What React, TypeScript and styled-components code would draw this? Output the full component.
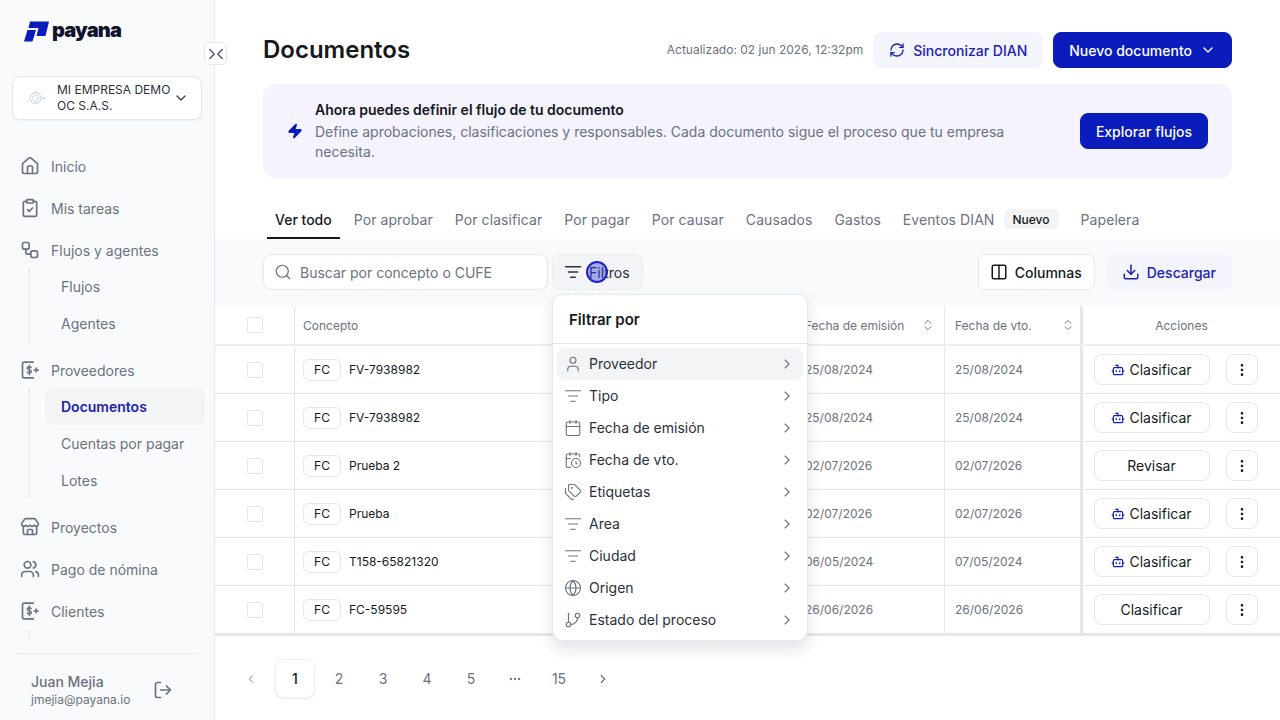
import React, { ReactElement, ReactNode } from "react";
import styled, { createGlobalStyle } from "styled-components";
import {
  Bot,
  Calendar,
  CalendarClock,
  ChevronDown,
  ChevronLeft,
  ChevronRight,
  ChevronsUpDown,
  ClipboardCheck,
  Columns2,
  Download,
  Ellipsis,
  EllipsisVertical,
  GitBranch,
  Globe,
  House,
  ListFilter,
  LogOut,
  RefreshCw,
  Search,
  Store,
  Tags,
  User,
  Users,
  Workflow,
  Zap,
} from "lucide-react";

const PRIMARY = "#0b1cbd";
const TEXT_DARK = "#16181d";
const TEXT_GREY = "#6b7280";
const BORDER = "#e5e7eb";
const SOFT_BG = "#f9fafb";
const LIGHT_BLUE = "#f3f4fc";

const GlobalStyle = createGlobalStyle`
  html, body {
    margin: 0;
    height: 100%;
    overflow: hidden;
    background: #fff;
  }
  body, button, input {
    font-family: Inter, "Noto Sans", sans-serif;
  }
  * {
    box-sizing: border-box;
  }
`;

const Page = styled.div`
  display: flex;
  width: 1280px;
  height: 720px;
  overflow: hidden;
  position: relative;
`;

/* sidebar */

const Sidebar = styled.aside`
  width: 215px;
  flex-shrink: 0;
  height: 720px;
  background: ${SOFT_BG};
  border-right: 1px solid ${BORDER};
  display: flex;
  flex-direction: column;
  position: relative;
`;

const LogoRow = styled.div`
  display: flex;
  align-items: center;
  gap: 2px;
  height: 76px;
  padding: 0 0 14px 24px;
`;

const LogoText = styled.span`
  font-size: 20px;
  line-height: 24px;
  font-weight: 900;
  letter-spacing: -0.8px;
  color: #10122e;
  margin-bottom: 3px;
`;

const CollapseButton = styled.div`
  position: absolute;
  left: 204px;
  top: 42px;
  width: 23px;
  height: 23px;
  background: #fff;
  border: 1px solid ${BORDER};
  border-radius: 5px;
  display: flex;
  align-items: center;
  justify-content: center;
  color: #4b5563;
  z-index: 2;

  svg {
    flex-shrink: 0;
  }

  svg + svg {
    margin-left: -10px;
  }
`;

const CompanySelect = styled.div`
  margin: 0 12px;
  height: 44px;
  background: #fff;
  border: 1px solid ${BORDER};
  border-radius: 8px;
  box-shadow: 0 1px 2px rgba(16, 24, 40, 0.05);
  display: flex;
  align-items: center;
  padding: 0 12px 0 16px;
  color: #374151;
  flex-shrink: 0;
`;

const CompanyName = styled.div`
  flex: 1;
  margin-left: 12px;
  font-size: 12px;
  line-height: 16px;
  font-weight: 400;
  color: #2b303b;
`;

const Nav = styled.nav`
  margin-top: 26px;
  flex: 1;
  overflow: hidden;
`;

const NavItem = styled.div`
  height: 42px;
  display: flex;
  align-items: center;
  gap: 11px;
  padding: 0 0 2px 20px;
  font-size: 14px;
  color: ${TEXT_GREY};
`;

const SubGroup = styled.div<{ $stub?: boolean }>`
  margin: -4px 0 8px 29px;
  border-left: 1px solid ${BORDER};
  padding-left: 15px;
  width: 176px;
  height: ${(p) => (p.$stub ? "12px" : "auto")};
`;

const SubItem = styled.div<{ $active?: boolean }>`
  height: 37px;
  display: flex;
  align-items: center;
  padding-left: 16px;
  border-radius: 8px;
  font-size: 14px;
  font-weight: ${(p) => (p.$active ? 600 : 400)};
  color: ${(p) => (p.$active ? "#1a22b0" : TEXT_GREY)};
  background: ${(p) => (p.$active ? "#f3f4f6" : "transparent")};
`;

const SidebarFooter = styled.div`
  margin: 0 17px;
  height: 67px;
  border-top: 1px solid ${BORDER};
  display: flex;
  align-items: center;
  padding: 6px 0 0 14px;
  gap: 23px;
  flex-shrink: 0;
  color: ${TEXT_GREY};
`;

const UserName = styled.div`
  font-size: 14px;
  line-height: 20px;
  font-weight: 500;
  color: ${TEXT_GREY};
`;

const UserMail = styled.div`
  font-size: 12px;
  line-height: 16px;
  color: ${TEXT_GREY};
`;

/* main */

const Main = styled.main`
  flex: 1;
  min-width: 0;
  display: flex;
  flex-direction: column;
`;

const Top = styled.div`
  padding: 32px 48px 0;
`;

const HeaderRow = styled.header`
  display: flex;
  align-items: center;
  height: 36px;
`;

const Title = styled.h1`
  margin: 0;
  flex: 1;
  font-size: 24px;
  line-height: 36px;
  font-weight: 600;
  color: ${TEXT_DARK};
`;

const Updated = styled.span`
  font-size: 12px;
  color: ${TEXT_GREY};
  margin: 0 10px 2px 0;
`;

const Button = styled.button<{ $kind?: "primary" | "light" | "white"; $compact?: boolean }>`
  height: 36px;
  display: inline-flex;
  align-items: center;
  justify-content: center;
  gap: 8px;
  padding: 0 ${(p) => (p.$compact ? 12 : 15)}px;
  border-radius: 8px;
  font-size: 14px;
  font-weight: 500;
  white-space: nowrap;
  border: 1px solid
    ${(p) =>
      p.$kind === "primary"
        ? PRIMARY
        : p.$kind === "light"
          ? LIGHT_BLUE
          : BORDER};
  background: ${(p) =>
    p.$kind === "primary"
      ? PRIMARY
      : p.$kind === "light"
        ? LIGHT_BLUE
        : "#fff"};
  color: ${(p) =>
    p.$kind === "primary"
      ? "#fff"
      : p.$kind === "light"
        ? "#1a22b0"
        : TEXT_DARK};
`;

const HeaderActions = styled.div`
  display: flex;
  gap: 10px;
`;

const Banner = styled.section`
  margin-top: 16px;
  height: 94px;
  border-radius: 12px;
  background: #f4f3fe;
  display: flex;
  align-items: center;
  padding: 0 24px;
`;

const BannerText = styled.div`
  flex: 1;
  margin-left: 12px;
  max-width: 735px;
  margin-right: auto;
`;

const BannerTitle = styled.div`
  font-size: 14px;
  line-height: 20px;
  font-weight: 600;
  color: ${TEXT_DARK};
`;

const BannerBody = styled.div`
  margin-top: 2px;
  font-size: 14px;
  line-height: 20px;
  color: ${TEXT_GREY};
`;

const Tabs = styled.div`
  display: flex;
  gap: 6px;
  margin: 23px 0 0 4px;
  height: 38px;
`;

const Tab = styled.div<{ $active?: boolean }>`
  display: flex;
  align-items: center;
  padding: 0 8px;
  font-size: 14px;
  letter-spacing: ${(p) => (p.$active ? 0 : 0.08)}px;
  font-weight: ${(p) => (p.$active ? 500 : 400)};
  color: ${(p) => (p.$active ? TEXT_DARK : TEXT_GREY)};
  border-bottom: 2px solid ${(p) => (p.$active ? TEXT_DARK : "transparent")};
`;

const TabBadge = styled.span`
  margin-left: 9px;
  height: 20px;
  padding: 0 9px;
  border-radius: 6px;
  background: #f3f4f6;
  color: ${TEXT_DARK};
  font-size: 12px;
  letter-spacing: 0;
  font-weight: 500;
  display: inline-flex;
  align-items: center;
`;

const Toolbar = styled.div`
  position: relative;
  height: 67px;
  background: ${SOFT_BG};
  display: flex;
  align-items: center;
  padding: 0 48px 1px;
`;

const SearchBox = styled.div`
  width: 285px;
  height: 36px;
  background: #fff;
  border: 1px solid ${BORDER};
  border-radius: 8px;
  display: flex;
  align-items: center;
  gap: 10px;
  padding: 0 11px;
  color: ${TEXT_GREY};
  font-size: 14px;

  svg {
    margin: 0 -1.5px;
  }
`;

const FilterButton = styled.div`
  position: relative;
  margin-left: 4px;
  width: 91px;
  height: 36px;
  background: #f3f4f6;
  border: 1px dashed ${BORDER};
  border-radius: 8px;
  display: flex;
  align-items: center;
  gap: 8px;
  padding-left: 12px;
  font-size: 14px;
  color: #2b303b;

  svg {
    margin: 0 -1px;
  }
`;

const ClickDot = styled.span`
  position: absolute;
  left: 33px;
  top: 6px;
  width: 22px;
  height: 22px;
  border-radius: 50%;
  border: 2px solid #1a22d0;
  background: rgba(40, 60, 220, 0.4);
`;

const ToolbarRight = styled.div`
  margin-left: auto;
  display: flex;
  gap: 12px;

  svg {
    margin: 0 -1px;
  }
`;

const FilterMenu = styled.div`
  position: absolute;
  left: 337px;
  top: 55px;
  width: 256px;
  height: 347px;
  background: #fff;
  border: 1px solid ${BORDER};
  border-radius: 10px;
  box-shadow: 0 8px 16px rgba(16, 24, 40, 0.12);
  z-index: 3;
`;

const MenuTitle = styled.div`
  height: 49px;
  border-bottom: 1px solid ${BORDER};
  padding-left: 16px;
  display: flex;
  align-items: center;
  font-size: 15px;
  font-weight: 600;
  color: ${TEXT_DARK};
`;

const MenuList = styled.div`
  padding: 4px;
`;

const MenuItem = styled.div<{ $active?: boolean }>`
  height: 32px;
  display: flex;
  align-items: center;
  gap: 7px;
  padding: 0 8px 2px 7px;
  border-radius: 8px;
  background: ${(p) => (p.$active ? "#f3f4f6" : "transparent")};
  font-size: 14px;
  color: #2b303b;

  svg {
    color: ${TEXT_GREY};
    flex-shrink: 0;
    margin-top: 2px;
  }

  span {
    flex: 1;
  }
`;

/* table */

const Table = styled.div`
  border-bottom: 2px solid ${BORDER};
`;

const Row = styled.div<{ $head?: boolean }>`
  display: grid;
  grid-template-columns: 80px 500px 150px 135px 200px;
  height: ${(p) => (p.$head ? "40px" : "48px")};
  border-bottom: ${(p) => (p.$head ? 2 : 1)}px solid
    ${(p) => (p.$head ? "#eceef1" : BORDER)};
`;

const Cell = styled.div<{ $check?: boolean }>`
  display: flex;
  align-items: center;
  justify-content: ${(p) => (p.$check ? "center" : "flex-start")};
  gap: 8px;
  padding: 0 ${(p) => (p.$check ? 0 : "8px")};
  border-right: 1px solid ${BORDER};
  font-size: 12px;
  color: ${TEXT_DARK};
`;

const ConceptHead = styled(Cell)`
  color: ${TEXT_GREY};
`;

const DateCell = styled(Cell)<{ $last?: boolean }>`
  padding: 0 10px;
  color: ${TEXT_GREY};
  border-right: ${(p) => (p.$last ? "none" : `1px solid ${BORDER}`)};
`;

const HeadCell = styled(DateCell)`
  justify-content: space-between;
  padding-right: ${(p) => (p.$last ? 5 : 9)}px;

  svg {
    color: ${TEXT_GREY};
  }
`;

const ActionCell = styled.div`
  display: flex;
  align-items: center;
  gap: 16px;
  padding-left: 11px;
  border-left: 3px solid ${BORDER};
`;

const ActionHead = styled(ActionCell)`
  justify-content: center;
  padding: 0;
  font-size: 12px;
  color: ${TEXT_GREY};
`;

const Checkbox = styled.span`
  width: 16px;
  height: 16px;
  background: #fff;
  border: 1px solid ${BORDER};
  border-radius: 2px;
`;

const DocType = styled.span`
  width: 38px;
  height: 22px;
  border: 1px solid ${BORDER};
  border-radius: 6px;
  display: inline-flex;
  align-items: center;
  justify-content: center;
  font-weight: 400;
`;

const RowButton = styled.button`
  width: 116px;
  height: 31px;
  padding: 0 1px 0 0;
  background: #fff;
  border: 1px solid ${BORDER};
  border-radius: 8px;
  display: inline-flex;
  align-items: center;
  justify-content: center;
  gap: 4px;
  font-size: 14px;
  font-weight: 400;
  color: ${TEXT_DARK};

  svg {
    color: ${PRIMARY};
  }
`;

const MoreButton = styled.button`
  width: 32px;
  height: 31px;
  padding: 0;
  background: #fff;
  border: 1px solid ${BORDER};
  border-radius: 8px;
  display: inline-flex;
  align-items: center;
  justify-content: center;
  color: ${TEXT_DARK};
`;

/* pagination */

const Pagination = styled.div`
  display: flex;
  gap: 4px;
  padding: 23px 0 0 16px;
`;

const PageCell = styled.div<{ $current?: boolean; $muted?: boolean }>`
  width: 40px;
  height: 39px;
  border-radius: 8px;
  display: flex;
  align-items: center;
  justify-content: center;
  font-size: 14px;
  font-weight: ${(p) => (p.$current ? 500 : 400)};
  color: ${(p) =>
    p.$current ? TEXT_DARK : p.$muted ? "#b4b8c0" : TEXT_GREY};
  background: #fff;
  border: 1px solid ${(p) => (p.$current ? "#eff0f2" : "transparent")};
  box-shadow: ${(p) =>
    p.$current ? "0 1px 2px rgba(16, 24, 40, 0.08)" : "none"};
`;

/* drawn icons */

const LogoMark = (): ReactElement => (
  <svg width="26" height="21" viewBox="24 21 26 21" fill={PRIMARY}>
    <path d="M30 21.5H49L45.5 36H36.5L38.5 28H28.5Z" />
    <path d="M27.5 30H36L32.5 41.5H24Z" />
  </svg>
);

const CompanyLogo = (): ReactElement => (
  <svg width="16" height="16" viewBox="0 0 16 16" fill="none" stroke="#8db4ea">
    <circle cx="6.5" cy="8" r="5.5" strokeDasharray="1.4 1" />
    <circle cx="6.5" cy="8" r="3" strokeDasharray="1 1" />
    <path d="M12.5 8h1M15 8h1" strokeWidth="1.4" />
  </svg>
);

const BillIcon = (): ReactElement => (
  <svg
    width="20"
    height="20"
    viewBox="0 0 24 24"
    fill="none"
    stroke="currentColor"
    strokeWidth="2"
    strokeLinecap="round"
    strokeLinejoin="round"
  >
    <path d="M16 2.500H5a2 2 0 0 0-2 2v15a2 2 0 0 0 2 2h11" />
    <path
      strokeWidth="1.700"
      d="M13.500 9.200c-.4-.8-1.200-1.200-2.400-1.200-1.400 0-2.400.7-2.400 1.800 0 2.500 4.900 1.300 4.900 4 0 1.100-1 1.800-2.500 1.800-1.100 0-2-.4-2.500-1.300M11.100 6.200v11.600"
    />
    <path d="M17 12h5M19.500 9.800v4.400" />
  </svg>
);

/* data */

interface DocRow {
  concept: string;
  issued: string;
  due: string;
  action: string;
  bot: boolean;
}

const ROWS: DocRow[] = [
  { concept: "FV-7938982", issued: "25/08/2024", due: "25/08/2024", action: "Clasificar", bot: true },
  { concept: "FV-7938982", issued: "25/08/2024", due: "25/08/2024", action: "Clasificar", bot: true },
  { concept: "Prueba 2", issued: "02/07/2026", due: "02/07/2026", action: "Revisar", bot: false },
  { concept: "Prueba", issued: "02/07/2026", due: "02/07/2026", action: "Clasificar", bot: true },
  { concept: "T158-65821320", issued: "06/05/2024", due: "07/05/2024", action: "Clasificar", bot: true },
  { concept: "FC-59595", issued: "26/06/2026", due: "26/06/2026", action: "Clasificar", bot: false },
];

const TABS = [
  "Por aprobar",
  "Por clasificar",
  "Por pagar",
  "Por causar",
  "Causados",
  "Gastos",
];

const MENU_ICON = { size: 18, strokeWidth: 1.5 };

const FILTERS: { label: string; icon: ReactNode }[] = [
  { label: "Proveedor", icon: <User {...MENU_ICON} /> },
  { label: "Tipo", icon: <ListFilter {...MENU_ICON} /> },
  { label: "Fecha de emisión", icon: <Calendar {...MENU_ICON} /> },
  { label: "Fecha de vto.", icon: <CalendarClock {...MENU_ICON} /> },
  { label: "Etiquetas", icon: <Tags {...MENU_ICON} /> },
  { label: "Area", icon: <ListFilter {...MENU_ICON} /> },
  { label: "Ciudad", icon: <ListFilter {...MENU_ICON} /> },
  { label: "Origen", icon: <Globe {...MENU_ICON} /> },
  { label: "Estado del proceso", icon: <GitBranch {...MENU_ICON} /> },
];

const SideBar = (): ReactElement => (
  <Sidebar>
    <LogoRow>
      <LogoMark />
      <LogoText>payana</LogoText>
    </LogoRow>
    <CollapseButton>
      <ChevronRight size={18} strokeWidth={1.8} />
      <ChevronLeft size={18} strokeWidth={1.8} />
    </CollapseButton>
    <CompanySelect>
      <CompanyLogo />
      <CompanyName>MI EMPRESA DEMO OC S.A.S.</CompanyName>
      <ChevronDown size={16} />
    </CompanySelect>
    <Nav>
      <NavItem><House size={20} />Inicio</NavItem>
      <NavItem><ClipboardCheck size={20} />Mis tareas</NavItem>
      <NavItem><Workflow size={20} />Flujos y agentes</NavItem>
      <SubGroup>
        <SubItem>Flujos</SubItem>
        <SubItem>Agentes</SubItem>
      </SubGroup>
      <NavItem><BillIcon />Proveedores</NavItem>
      <SubGroup>
        <SubItem $active>Documentos</SubItem>
        <SubItem>Cuentas por pagar</SubItem>
        <SubItem>Lotes</SubItem>
      </SubGroup>
      <NavItem><Store size={20} />Proyectos</NavItem>
      <NavItem><Users size={20} />Pago de nómina</NavItem>
      <NavItem><BillIcon />Clientes</NavItem>
      <SubGroup $stub />
    </Nav>
    <SidebarFooter>
      <div>
        <UserName>Juan Mejia</UserName>
        <UserMail>jmejia@payana.io</UserMail>
      </div>
      <LogOut size={20} />
    </SidebarFooter>
  </Sidebar>
);

const App = (): ReactElement => (
  <Page>
    <GlobalStyle />
    <SideBar />
    <Main>
      <Top>
        <HeaderRow>
          <Title>Documentos</Title>
          <Updated>Actualizado: 02 jun 2026, 12:32pm</Updated>
          <HeaderActions>
            <Button $kind="light">
              <RefreshCw size={16} />
              Sincronizar DIAN
            </Button>
            <Button $kind="primary">
              Nuevo documento
              <ChevronDown size={16} />
            </Button>
          </HeaderActions>
        </HeaderRow>
        <Banner>
          <Zap size={16} color={PRIMARY} fill={PRIMARY} />
          <BannerText>
            <BannerTitle>Ahora puedes definir el flujo de tu documento</BannerTitle>
            <BannerBody>
              Define aprobaciones, clasificaciones y responsables. Cada documento
              sigue el proceso que tu empresa necesita.
            </BannerBody>
          </BannerText>
          <Button $kind="primary">Explorar flujos</Button>
        </Banner>
        <Tabs>
          <Tab $active>Ver todo</Tab>
          {TABS.map((t) => (
            <Tab key={t}>{t}</Tab>
          ))}
          <Tab>
            Eventos DIAN<TabBadge>Nuevo</TabBadge>
          </Tab>
          <Tab>Papelera</Tab>
        </Tabs>
      </Top>
      <Toolbar>
        <SearchBox>
          <Search size={18} strokeWidth={1.6} />
          Buscar por concepto o CUFE
        </SearchBox>
        <FilterButton>
          <ListFilter size={18} />
          Filtros
          <ClickDot />
        </FilterButton>
        <ToolbarRight>
          <Button $compact>
            <Columns2 size={18} />
            Columnas
          </Button>
          <Button $kind="light">
            <Download size={18} />
            Descargar
          </Button>
        </ToolbarRight>
        <FilterMenu>
          <MenuTitle>Filtrar por</MenuTitle>
          <MenuList>
            {FILTERS.map((f, i) => (
              <MenuItem key={f.label} $active={i === 0}>
                {f.icon}
                <span>{f.label}</span>
                <ChevronRight size={16} strokeWidth={1.6} />
              </MenuItem>
            ))}
          </MenuList>
        </FilterMenu>
      </Toolbar>
      <Table>
        <Row $head>
          <Cell $check><Checkbox /></Cell>
          <ConceptHead>Concepto</ConceptHead>
          <HeadCell>Fecha de emisión<ChevronsUpDown size={14} strokeWidth={1.6} /></HeadCell>
          <HeadCell $last>Fecha de vto.<ChevronsUpDown size={14} strokeWidth={1.6} /></HeadCell>
          <ActionHead>Acciones</ActionHead>
        </Row>
        {ROWS.map((r, i) => (
          <Row key={i}>
            <Cell $check><Checkbox /></Cell>
            <Cell>
              <DocType>FC</DocType>
              {r.concept}
            </Cell>
            <DateCell>{r.issued}</DateCell>
            <DateCell $last>{r.due}</DateCell>
            <ActionCell>
              <RowButton>
                {r.bot && <Bot size={14} />}
                {r.action}
              </RowButton>
              <MoreButton><EllipsisVertical size={16} /></MoreButton>
            </ActionCell>
          </Row>
        ))}
      </Table>
      <Pagination>
        <PageCell $muted><ChevronLeft size={14} /></PageCell>
        <PageCell $current>1</PageCell>
        <PageCell>2</PageCell>
        <PageCell>3</PageCell>
        <PageCell>4</PageCell>
        <PageCell>5</PageCell>
        <PageCell><Ellipsis size={14} /></PageCell>
        <PageCell>15</PageCell>
        <PageCell><ChevronRight size={14} /></PageCell>
      </Pagination>
    </Main>
  </Page>
);

export default App;
